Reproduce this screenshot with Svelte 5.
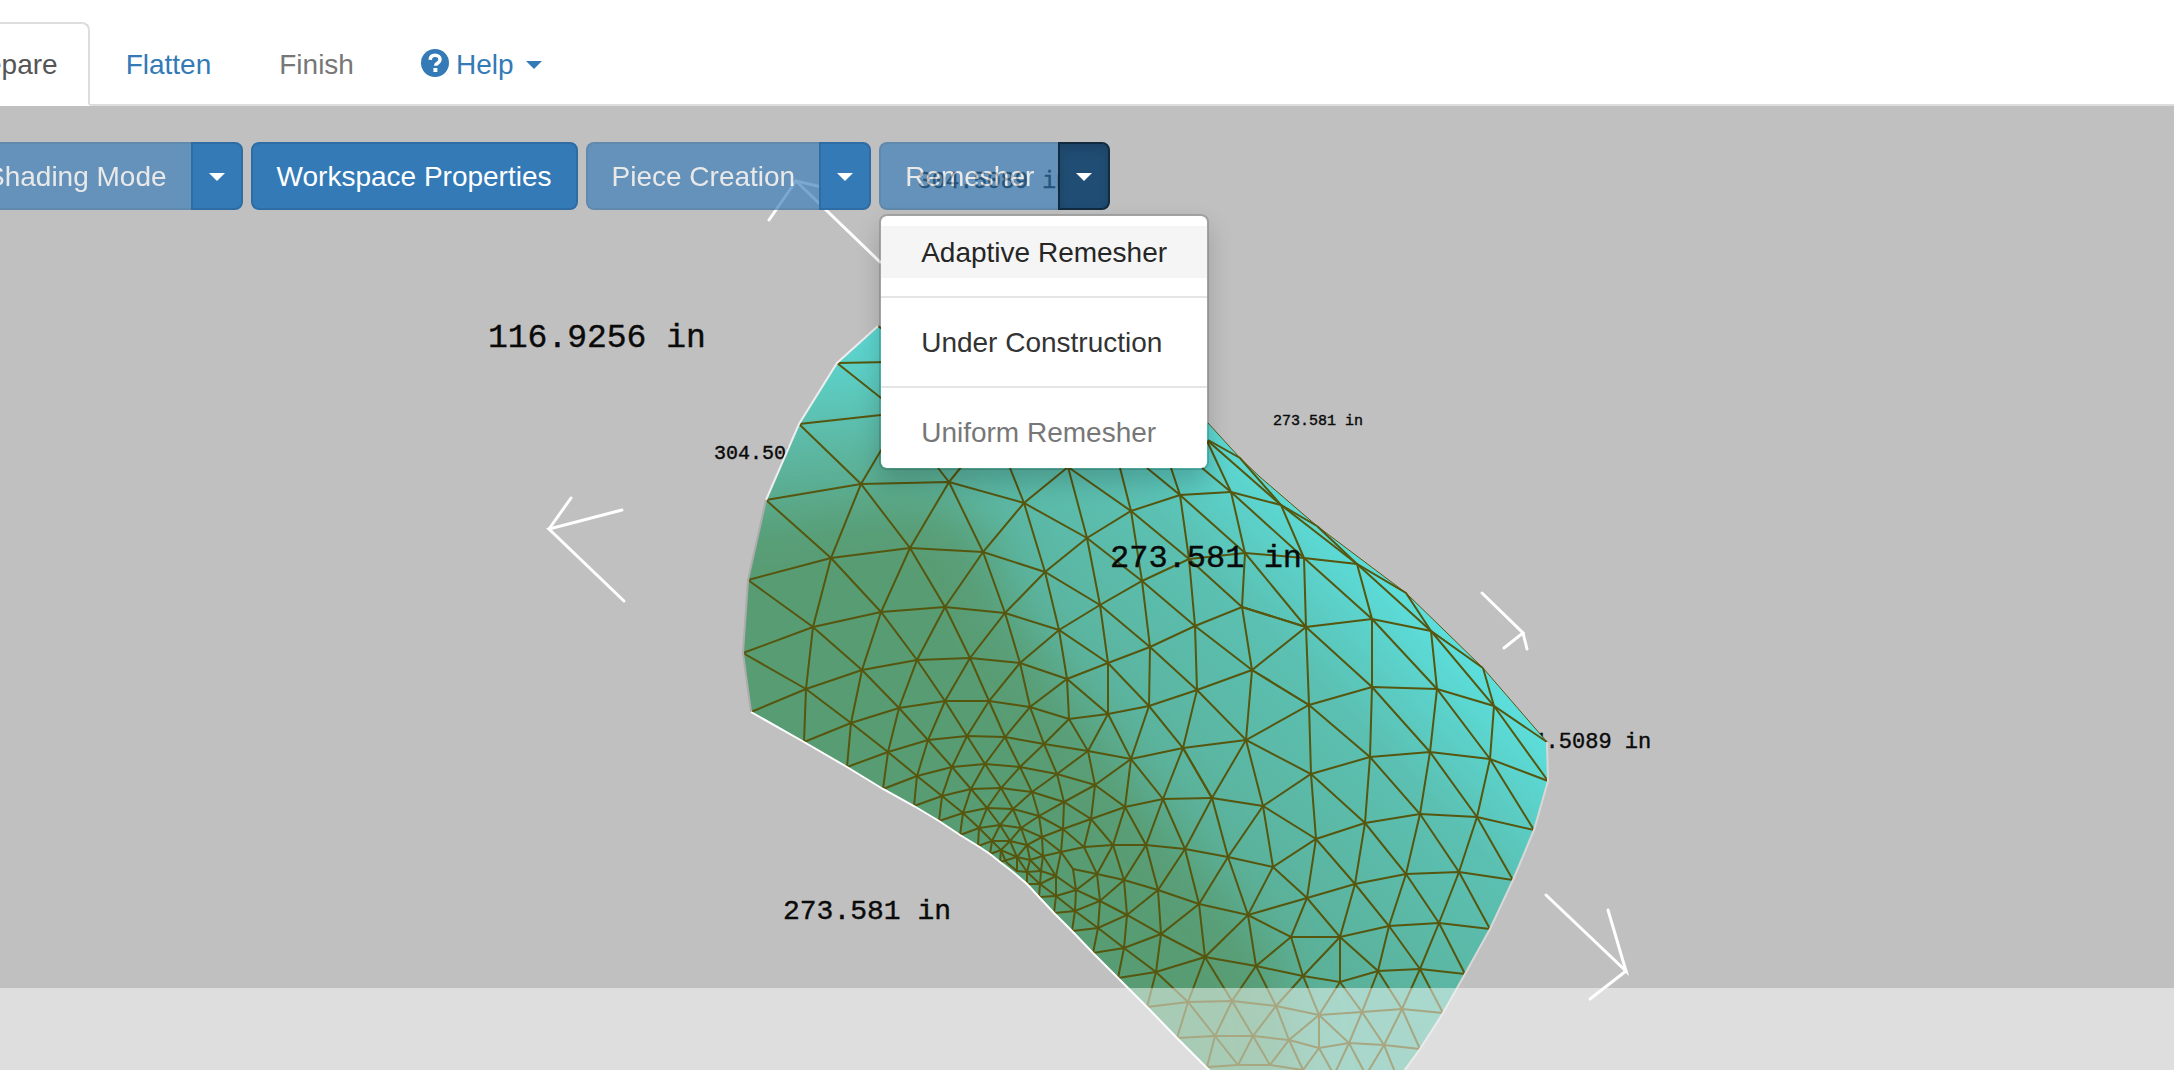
<script>
  const outline =
    '878,326 837,363 799,424 766,500 748,580 743,653 751,712 804,742 847,767 883,789 914,806 939,821 960,835 978,846 990,854 1000,862 1013,872 1027,884 1039,897 1054,913 1072,931 1093,953 1118,978 1147,1007 1177,1038 1210,1071 1404,1071 1420,1049 1443,1013 1465,974 1490,929 1513,880 1534,830 1548,781 1547,742 1483,668 1406,593 1317,526 1260,477 1240,458 1208,423 1100,330';

  const ridge = '1208,423 1240,458 1260,477 1317,526 1406,593 1483,668 1547,742';
  const leftRim = '878,326 837,363 799,424 766,500';
  const shadedRim = '766,500 748,580 743,653 751,712';
  const lowerRim =
    '751,712 804,742 847,767 883,789 914,806 939,821 960,835 978,846 990,854 1000,862 1013,872 1027,884 1039,897 1054,913 1072,931 1093,953 1118,978 1147,1007 1177,1038 1210,1071';
  const rightRim = '1547,742 1548,781 1534,830 1513,880 1490,929 1465,974 1443,1013 1420,1049 1404,1071';

  const edges = [
    '878,326 900,342',
    '837,363 890,362',
    '837,363 881,398 905,410',
    '799,424 881,415 905,410 861,484',
    '766,500 861,484 949,482 1024,503 1087,538 1142,581 1195,626 1252,670 1309,705 1370,757 1420,814 1459,872 1490,929',
    '748,580 831,558 910,548 983,552 1045,572 1100,605 1150,647 1197,690 1246,740 1311,774 1365,823 1406,874 1439,923 1465,974',
    '743,653 813,627 881,612 945,607 1005,613 1059,630 1108,663 1149,706 1183,748 1212,798 1263,806 1316,839 1355,884 1389,926 1420,969 1443,1013',
    '751,712 806,689 862,670 917,660 970,658 1020,663 1067,679 1108,714 1131,759 1163,799 1185,849',
    '804,742 851,723 899,708 945,701 989,701 1030,707 1069,719 1108,714 1149,706 1197,690 1252,670 1306,627 1372,619 1431,631 1483,668',
    '847,767 888,752 928,740 967,736 1005,737 1044,744 1088,751 1131,759 1183,748 1246,740 1309,705 1372,687 1437,689 1494,706 1547,742',
    '883,789 917,776 952,767 985,764 1020,767 1057,774 1095,785 1131,759',
    '914,806 942,796 971,789 1001,788 1032,792 1064,802 1091,819 1113,845 1124,880 1127,915 1124,948 1118,978',
    '939,821 963,813 987,808 1013,809 1039,816 1063,829 1084,847 1097,874 1100,901 1098,928 1093,953',
    '960,835 979,828 1000,825 1021,828 1042,837 1061,852 1073,869 1076,890 1075,911 1072,931',
    '978,846 992,841 1010,841 1027,845 1043,856 1056,876 1056,896 1054,913',
    '990,854 1001,850 1017,857 1030,860 1041,871 1040,884 1039,897',
    '1000,862 1017,857 1027,872 1027,884',
    '1017,857 1017,871 1027,872',
    '1006,862 1017,871',
    '1030,860 1027,872 1041,871',
    '1027,872 1040,884 1027,884',
    '1069,719 1088,751 1095,785 1091,819 1084,847',
    '1067,679 1069,719',
    '1108,714 1088,751',
    '1095,785 1125,807 1146,845 1158,890 1161,934 1156,972 1147,1007',
    '1091,819 1125,807 1163,799 1212,798',
    '861,484 831,558 813,627 806,689 804,742',
    '938,468 949,482 910,548 881,612 862,670 851,723 847,767',
    '962,466 949,482',
    '1068,467 1024,503 983,552 945,607 917,660 899,708 888,752 883,789',
    '1231,492 1180,495 1131,511 1087,538 1045,572 1005,613 970,658 945,701 928,740 917,776 914,806',
    '1304,558 1245,553 1189,559 1142,581 1100,605 1059,630 1020,663 989,701 967,736 952,767 942,796 939,821',
    '1306,627 1242,607 1195,626 1150,647 1108,663 1067,679 1030,707 1005,737 985,764 971,789 963,813 960,835',
    '1069,719 1044,744 1020,767 1001,788 987,808 979,828 978,846',
    '1088,751 1057,774 1032,792 1013,809 1000,825 992,841 990,854',
    '1095,785 1064,802 1039,816 1021,828 1010,841 1001,850 1000,862',
    '1091,819 1063,829 1042,837 1027,845 1017,857',
    '1273,867 1228,857 1185,849 1146,845 1113,845 1084,847 1061,852 1043,856 1030,860',
    '799,424 861,484 910,548 945,607 970,658 989,701 1005,737 1020,767 1032,792 1039,816 1042,837 1043,856 1041,871',
    '766,500 831,558 881,612 917,660 945,701 967,736 985,764 1001,788 1013,809 1021,828 1027,845 1030,860',
    '748,580 813,627 862,670 899,708 928,740 952,767 971,789 987,808 1000,825 1010,841 1017,857',
    '743,653 806,689 851,723 888,752 917,776 942,796 963,813 979,828 992,841 1001,850 1006,862',
    '949,482 983,552 1005,613 1020,663 1030,707 1044,744 1057,774 1064,802 1063,829 1061,852 1056,876',
    '1010,468 1024,503 1045,572 1059,630 1067,679',
    '1060,440 1068,467 1087,538 1100,605 1108,663 1108,714',
    '1120,468 1131,511 1142,581 1150,647 1149,706 1131,759 1125,807 1113,845 1097,874 1076,890 1056,896',
    '1171,468 1180,495 1189,559 1195,626 1197,690 1183,748 1163,799 1146,845 1124,880 1100,901 1075,911 1054,913',
    '1207,441 1231,492 1245,553 1242,607 1252,670 1246,740 1212,798 1185,849 1158,890 1127,915 1098,928 1072,931',
    '1068,467 1131,511 1189,559 1242,607',
    '1147,468 1180,495 1245,553 1306,627 1372,687 1430,752 1477,817 1513,880',
    '1202,468 1231,492 1304,558 1372,619 1437,689 1490,759 1534,830',
    '1231,492 1281,505 1317,526',
    '1208,441 1281,505 1357,564 1431,631 1494,706 1548,781',
    '1208,440 1240,458 1281,505 1304,558 1357,564 1406,593 1431,631 1437,689 1430,752 1420,814 1406,874 1389,926 1378,971 1362,1012 1349,1043 1334,1075',
    '1317,526 1357,564 1372,619 1372,687 1370,757 1365,823 1355,884 1340,937 1340,982 1319,1015 1319,1048 1334,1075',
    '1304,558 1306,627 1309,705 1311,774 1316,839 1307,898 1291,937 1256,966 1232,1001 1215,1036 1207,1067',
    '1483,668 1494,706 1490,759 1477,817 1459,872 1439,923 1420,969 1402,1009 1384,1045 1366,1075',
    '1242,607 1306,627',
    '1246,740 1263,806 1273,867 1307,898 1340,937 1378,971 1402,1009 1420,1049',
    '1252,670 1309,705',
    '1263,806 1311,774 1370,757 1430,752 1490,759 1548,781',
    '1183,748 1212,798 1228,857 1248,915 1256,966 1276,1006 1289,1040 1303,1070',
    '1263,806 1228,857 1199,904 1161,934 1124,948 1093,953',
    '1185,849 1199,904 1205,957 1232,1001 1253,1036 1270,1065',
    '1534,830 1477,817 1420,814 1365,823 1316,839 1273,867 1248,915 1205,957 1156,972 1118,978',
    '1513,880 1459,872 1406,874 1355,884 1307,898 1248,915 1199,904 1158,890 1124,880 1097,874 1073,869',
    '1041,871 1056,876 1076,890 1100,901 1127,915 1161,934 1205,957 1256,966 1303,976 1340,982 1378,971 1420,969 1465,974',
    '1027,884 1040,884 1056,896 1075,911 1098,928 1124,948 1156,972 1188,1002 1215,1036 1238,1065',
    '1056,876 1040,884',
    '1039,897 1056,896',
    '1205,957 1188,1002 1177,1038',
    '1248,915 1291,937 1340,937 1389,926 1439,923 1490,929',
    '1291,937 1303,976 1319,1015 1349,1043 1366,1075',
    '1340,937 1303,976 1276,1006 1253,1036 1238,1065',
    '1319,1015 1289,1040 1270,1065',
    '1319,1048 1303,1070',
    '1340,982 1362,1012 1384,1045 1395,1072',
    '1147,1007 1188,1002 1232,1001 1276,1006 1319,1015 1362,1012 1402,1009 1443,1013',
    '1177,1038 1215,1036 1253,1036 1289,1040 1319,1048 1349,1043 1384,1045 1420,1049',
    '1207,1067 1238,1065 1270,1065 1303,1070'
  ];

  const arrows = [
    '624,601 549,529 622,510',
    '549,529 571,498',
    '880,262 796,181 769,220',
    '796,181 860,196',
    '1482,593 1523,633 1504,648',
    '1523,633 1527,649',
    '1546,895 1626,971 1608,910',
    '1626,971 1590,999'
  ];
</script>

<div class="page">
  <nav>
    <ul class="tabs">
      <li><a class="tab active" href="#prepare">Prepare</a></li>
      <li><a class="tab" href="#flatten">Flatten</a></li>
      <li><a class="tab muted" href="#finish" aria-disabled="true">Finish</a></li>
      <li>
        <a class="tab help" href="#help">
          <svg class="question" viewBox="0 0 28 28" aria-hidden="true">
            <circle cx="14" cy="14" r="14" fill="currentColor" />
            <path d="M9.2 10.8C9.4 7.7 11.2 6.3 14 6.3s5 1.6 5 4.2c0 2.2-1.3 3-2.5 3.8-1.1.7-1.8 1.2-1.8 2.4" fill="none" stroke="#fff" stroke-width="3.6" />
            <path d="M12.4 19h4v4h-4z" fill="#fff" />
          </svg>
          <span>Help</span>
          <span class="caret"></span>
        </a>
      </li>
    </ul>
  </nav>

  <main>
    <svg class="scene" viewBox="0 106 2174 964" role="img" aria-label="3D mesh preview">
      <defs>
        <linearGradient id="sheen" gradientUnits="userSpaceOnUse" x1="1130" y1="750" x2="1370" y2="520">
          <stop offset="0" stop-color="#5bb29b" />
          <stop offset="0.55" stop-color="#5bc0b2" />
          <stop offset="1" stop-color="#5ce4e4" />
        </linearGradient>
        <linearGradient id="crown" gradientUnits="userSpaceOnUse" x1="850" y1="350" x2="870" y2="550">
          <stop offset="0" stop-color="#5cd6d0" />
          <stop offset="0.45" stop-color="#5bb8a4" />
          <stop offset="1" stop-color="#599c73" />
        </linearGradient>
        <filter id="soft" filterUnits="userSpaceOnUse" x="600" y="200" width="900" height="1000">
          <feGaussianBlur stdDeviation="26" />
        </filter>
        <clipPath id="body"><polygon points={outline} /></clipPath>
      </defs>

      <g class="measure">
        <text x="488" y="347" font-size="33">116.9256 in</text>
        <text x="714" y="459" font-size="20">304.5089 in</text>
        <text x="1273" y="425" font-size="15">273.581 in</text>
        <text x="783" y="919" font-size="28">273.581 in</text>
        <text x="1506" y="748" font-size="22">304.5089 in</text>
        <text x="918" y="188" font-size="23">304.5089 in</text>
      </g>

      <g clip-path="url(#body)">
        <polygon points={outline} fill="url(#sheen)" />
        <g filter="url(#soft)">
          <polygon points="650,250 960,250 940,440 930,560 650,560" fill="url(#crown)" />
          <polygon points="650,525 850,515 940,505 985,530 1005,600 1060,680 1130,775 1215,880 1280,960 1310,1150 1050,1150 650,800" fill="#599c73" />
        </g>
      </g>

      <g class="edges">
        {#each edges as points}
          <polyline {points} />
        {/each}
        <polyline class="thin" points={ridge} />
      </g>

      <g class="rims">
        <polyline points={leftRim} stroke="#eeeeee" />
        <polyline points={shadedRim} stroke="#acacac" />
        <polyline points={lowerRim} stroke="#ffffff" />
        <polyline points={rightRim} stroke="#d8d8d8" />
      </g>

      <g class="arrows">
        {#each arrows as points}
          <polyline {points} />
        {/each}
      </g>

      <g class="measure">
        <text x="1110" y="567" font-size="32">273.581 in</text>
      </g>
    </svg>

    <div class="status"></div>

    <div class="toolbar">
      <div class="group">
        <button class="btn" disabled>Shading Mode</button>
        <button class="btn toggle" aria-label="Shading mode options"><span class="caret"></span></button>
      </div>
      <button class="btn">Workspace Properties</button>
      <div class="group">
        <button class="btn" disabled>Piece Creation</button>
        <button class="btn toggle" aria-label="Piece creation options"><span class="caret"></span></button>
      </div>
      <div class="group">
        <button class="btn" disabled>Remesher</button>
        <button class="btn toggle open" aria-label="Remesher options" aria-expanded="true"><span class="caret"></span></button>
        <ul class="menu">
          <li><a class="item hover" href="#adaptive">Adaptive Remesher</a></li>
          <li class="divider"></li>
          <li><a class="item" href="#construction">Under Construction</a></li>
          <li class="divider"></li>
          <li><a class="item off" href="#uniform" aria-disabled="true">Uniform Remesher</a></li>
        </ul>
      </div>
    </div>
  </main>
</div>

<style>
  :global(body) {
    margin: 0;
    background: #fff;
  }
  .page {
    overflow: hidden;
    font: 28px/40px "Liberation Sans", Helvetica, Arial, sans-serif;
    color: #333;
  }
  ul {
    list-style: none;
    margin: 0;
    padding: 0;
  }
  a {
    text-decoration: none;
  }
  nav {
    padding-top: 22px;
    border-bottom: 2px solid #ddd;
  }
  .tabs {
    display: flex;
    gap: 4px;
    margin: 0 0 -2px -74px;
  }
  .tab {
    display: block;
    padding: 21px 30px 19px;
    border: 2px solid transparent;
    border-radius: 8px 8px 0 0;
    color: #337ab7;
  }
  .active {
    color: #555;
    background: #fff;
    border-color: #ddd #ddd #fff;
  }
  .muted {
    color: #777;
  }
  .help {
    display: flex;
    align-items: center;
    gap: 8px;
  }
  .help .caret {
    margin-left: 4px;
  }
  .question {
    width: 28px;
    height: 28px;
    margin: 0 -1px 4px;
  }
  .caret {
    display: inline-block;
    border: 8px solid transparent;
    border-top-color: currentColor;
    border-bottom: 0;
  }
  main {
    position: relative;
    background: #c0c0c0;
  }
  .scene {
    display: block;
    width: 100%;
  }
  .measure {
    font-family: "Liberation Mono", "Courier New", monospace;
    fill: #0a0a0a;
    stroke: #0a0a0a;
    stroke-width: 0.4;
  }
  .edges {
    fill: none;
    stroke: #56560f;
    stroke-width: 2;
  }
  .thin {
    stroke-width: 1;
  }
  .rims {
    fill: none;
    stroke-width: 2;
  }
  .arrows {
    fill: none;
    stroke: #fff;
    stroke-width: 3;
    stroke-linecap: round;
  }
  .status {
    position: absolute;
    inset: auto 0 0;
    height: 82px;
    background: rgba(255, 255, 255, 0.48);
  }
  .toolbar {
    position: absolute;
    top: 36px;
    left: -40px;
    display: flex;
    gap: 8px;
  }
  .group {
    position: relative;
    display: flex;
  }
  .btn {
    margin: 0;
    padding: 13px 24px 11px;
    border: 2px solid #2e6da4;
    border-radius: 8px;
    background: #337ab7;
    color: #fff;
    font: inherit;
    white-space: nowrap;
  }
  .btn:disabled {
    opacity: 0.65;
  }
  .group .btn:first-child {
    border-radius: 8px 0 0 8px;
    border-right-width: 0;
  }
  .group .toggle {
    display: flex;
    align-items: center;
    padding: 13px 16px 11px;
    border-radius: 0 8px 8px 0;
  }
  .group .open {
    background: #204d74;
    border-color: #122b40;
    box-shadow: inset 0 6px 10px rgba(0, 0, 0, 0.125);
  }
  .menu {
    position: absolute;
    top: 100%;
    left: 0;
    margin-top: 4px;
    padding: 10px 0;
    background: #fff;
    background-clip: padding-box;
    border: 2px solid rgba(0, 0, 0, 0.15);
    border-radius: 8px;
    box-shadow: 0 12px 24px rgba(0, 0, 0, 0.175);
  }
  .item {
    display: block;
    padding: 7px 40px 5px;
    color: #333;
    white-space: nowrap;
  }
  .hover {
    background: #f5f5f5;
    color: #262626;
  }
  .off {
    color: #777;
  }
  .divider {
    height: 2px;
    margin: 18px 0;
    background: #e5e5e5;
  }
</style>
